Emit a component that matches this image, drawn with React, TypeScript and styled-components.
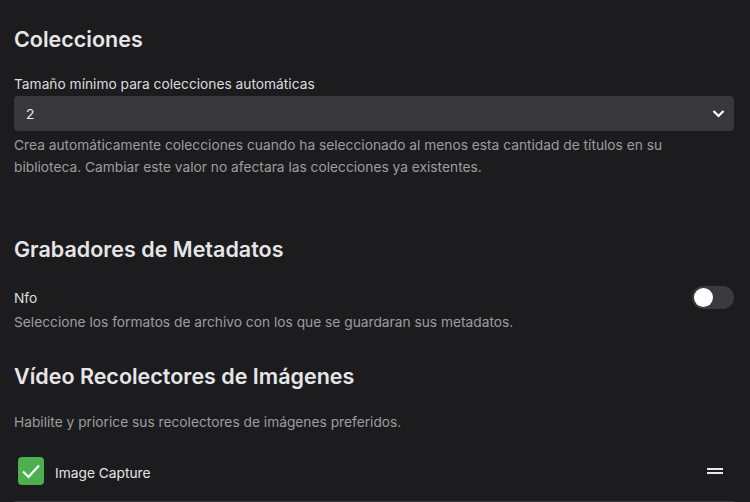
import React from 'react';
import styled, { createGlobalStyle } from 'styled-components';

const Global = createGlobalStyle`
  html, body {
    margin: 0;
    padding: 0;
    background: #1c1c1e;
  }
  body {
    font-family: Inter, "Noto Sans", sans-serif;
    color: #e4e4e6;
  }
`;

const Page = styled.div`
  padding: 25px 16px 0 14px;
  height: 502px;
  box-sizing: border-box;
  overflow: hidden;
`;

const Section = styled.section<{ $gap: number }>`
  margin-bottom: ${(p) => p.$gap}px;
`;

const Title = styled.h2`
  margin: 0 0 21px;
  font-size: 21.5px;
  line-height: 28px;
  font-weight: 600;
  color: #e6e6e8;
`;

const Label = styled.div`
  font-size: 13.75px;
  line-height: 20px;
  color: #dcdcde;
`;

const Help = styled.p<{ $top?: number }>`
  margin: ${(p) => p.$top ?? 0}px 0 0;
  max-width: 700px;
  font-size: 13.75px;
  line-height: 22px;
  color: #9c9ca1;
`;

const SelectBox = styled.div`
  margin-top: 2px;
  height: 35px;
  border-radius: 4px;
  background: #37373c;
  display: flex;
  align-items: center;
  justify-content: space-between;
  padding: 0 9px 0 12px;
  font-size: 13.75px;
  color: #ececee;
`;

const ToggleRow = styled.div`
  display: flex;
  align-items: center;
  justify-content: space-between;
  height: 23px;
  padding-top: 2px;
`;

const Track = styled.div`
  width: 42px;
  height: 23px;
  border-radius: 12px;
  background: #3a3a3f;
  display: flex;
  align-items: center;
  padding: 0 2px;
  box-sizing: border-box;
`;

const Knob = styled.div`
  width: 19px;
  height: 19px;
  border-radius: 50%;
  background: #ffffff;
`;

const ProviderRow = styled.div`
  display: flex;
  align-items: center;
  margin-top: 19px;
  padding: 5px 11px 16px 4px;
  border-bottom: 1px solid #3a3a3d;
`;

const Check = styled.div`
  width: 26px;
  height: 28px;
  border-radius: 4px;
  background: #4caf50;
  display: flex;
  align-items: center;
  justify-content: center;
`;

const ProviderName = styled.span`
  flex: 1;
  margin-left: 11px;
  font-size: 13.75px;
  color: #e4e4e6;
  padding-top: 3px;
`;

const Handle = styled.div`
  width: 16px;
  display: flex;
  flex-direction: column;
  gap: 2px;
  span {
    height: 2px;
    background: #e8e8ea;
  }
`;

export default function App() {
  return (
    <>
      <Global />
      <Page>
        <Section $gap={57}>
          <Title>Colecciones</Title>
          <Label>Tamaño mínimo para colecciones automáticas</Label>
          <SelectBox>
            <span>2</span>
            <svg width="13" height="9" viewBox="0 0 13 9">
              <path d="M1.5 2 L6.5 7 L11.5 2" fill="none" stroke="#ffffff" strokeWidth="2.2" />
            </svg>
          </SelectBox>
          <Help $top={3}>
            Crea automáticamente colecciones cuando ha seleccionado al menos esta cantidad de títulos en su
            biblioteca. Cambiar este valor no afectara las colecciones ya existentes.
          </Help>
        </Section>

        <Section $gap={29}>
          <Title>Grabadores de Metadatos</Title>
          <ToggleRow>
            <Label>Nfo</Label>
            <Track>
              <Knob />
            </Track>
          </ToggleRow>
          <Help $top={2}>Seleccione los formatos de archivo con los que se guardaran sus metadatos.</Help>
        </Section>

        <Section $gap={0}>
          <Title>Vídeo Recolectores de Imágenes</Title>
          <Help>Habilite y priorice sus recolectores de imágenes preferidos.</Help>
          <ProviderRow>
            <Check>
              <svg width="20" height="16" viewBox="0 0 20 16">
                <path d="M2 8.5 L7.5 14 L18 2.5" fill="none" stroke="#ffffff" strokeWidth="2.2" />
              </svg>
            </Check>
            <ProviderName>Image Capture</ProviderName>
            <Handle>
              <span />
              <span />
            </Handle>
          </ProviderRow>
        </Section>
      </Page>
    </>
  );
}
